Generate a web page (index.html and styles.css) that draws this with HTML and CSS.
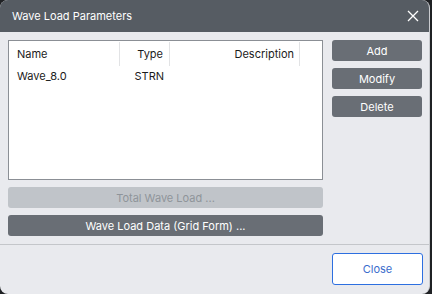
FILE: index.html
```html
<!DOCTYPE html>
<html lang="en">
<head>
  <meta charset="UTF-8">
  <title>Wave Load Parameters</title>
  <link rel="stylesheet" href="styles.css">
</head>
<body>
  <div class="dialog">
    <div class="titlebar">
      <span class="title">Wave Load Parameters</span>
      <svg class="close-x" width="12" height="12" viewBox="0 0 12 12">
        <path d="M1 1 L11 11 M11 1 L1 11" stroke="#ffffff" stroke-width="1.3" fill="none"/>
      </svg>
    </div>

    <div class="body">
      <div class="main">
        <div class="left">
          <div class="list">
            <div class="row head">
              <div class="col name">Name</div>
              <div class="col type">Type</div>
              <div class="col desc">Description</div>
            </div>
            <div class="row">
              <div class="col name">Wave_8.0</div>
              <div class="col type">STRN</div>
              <div class="col desc"></div>
            </div>
          </div>
          <button class="btn wide disabled">Total Wave Load ...</button>
          <button class="btn wide">Wave Load Data (Grid Form) ...</button>
        </div>
        <div class="side">
          <button class="btn">Add</button>
          <button class="btn">Modify</button>
          <button class="btn">Delete</button>
        </div>
      </div>
      <div class="footer">
        <button class="close-btn">Close</button>
      </div>
    </div>
  </div>
</body>
</html>
```

FILE: styles.css
```css
body {
  margin: 0;
  background-color: #1f2124;
  font-family: Inter, "Noto Sans", sans-serif;
  font-size: 11px;
}
.dialog {
  width: 429px;
  height: 294px;
  background-color: #e9eaee;
  border-radius: 8px;
  overflow: hidden;
  display: flex;
  flex-direction: column;
  border-right: 1px solid #c9cbcf;
}
.titlebar {
  height: 32px;
  flex-shrink: 0;
  background-color: #565c63;
  color: white;
  display: flex;
  align-items: center;
  justify-content: space-between;
  padding: 0 10px 0 12px;
}
.title {
  font-size: 11px;
}
.body {
  flex: 1;
  display: flex;
  flex-direction: column;
}
.main {
  display: flex;
  gap: 9px;
  padding: 8px 7px 0 8px;
}
.left {
  width: 315px;
  display: flex;
  flex-direction: column;
  gap: 7px;
}
.list {
  height: 138px;
  background-color: white;
  border: 1px solid #8b8f95;
}
.row {
  display: flex;
  height: 20px;
  align-items: center;
  color: #1b1b1b;
}
.row.head {
  height: 24px;
  margin-top: 1px;
}
.col {
  height: 100%;
  display: flex;
  align-items: center;
  box-sizing: border-box;
}
.name {
  width: 111px;
  padding-left: 8px;
}
.type {
  width: 50px;
  justify-content: flex-end;
  padding-right: 6px;
}
.desc {
  width: 130px;
  justify-content: flex-end;
  padding-right: 5px;
}
.head .col {
  border-right: 1px solid #e2e3e5;
}
.side {
  width: 90px;
  display: flex;
  flex-direction: column;
  gap: 7px;
}
.btn {
  height: 21px;
  border: none;
  border-radius: 3px;
  background-color: #696e75;
  color: white;
  font-family: inherit;
  font-size: 11px;
  padding: 0;
}
.btn.disabled {
  background-color: #c0c4c9;
  color: #8f949a;
}
.footer {
  margin-top: 8px;
  border-top: 1px solid #c4c6ca;
  display: flex;
  justify-content: flex-end;
  padding: 8px 6px 0 0;
}
.close-btn {
  width: 91px;
  height: 32px;
  background-color: white;
  border: 1px solid #2d6fe0;
  border-radius: 3px;
  color: #3a6ccc;
  font-family: inherit;
  font-size: 11px;
}
```
